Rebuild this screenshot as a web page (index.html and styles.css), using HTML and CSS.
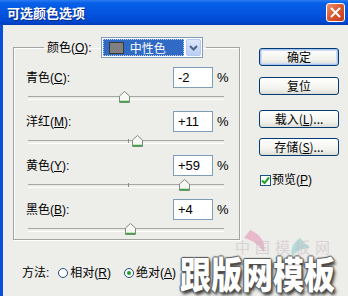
FILE: index.html
```html
<!DOCTYPE html>
<html lang="zh-CN">
<head>
	<meta charset="UTF-8">
	<title>可选颜色选项</title>
	<link rel="stylesheet" href="styles.css">
</head>
<body>
	<div class="window">
		<div class="titlebar">
			<span class="title">可选颜色选项</span>
			<span class="close">
				<svg width="11" height="11" viewBox="0 0 11 11"><path d="M1.5 1.5 L9.5 9.5 M9.5 1.5 L1.5 9.5" stroke="#fff" stroke-width="2" stroke-linecap="round"/></svg>
			</span>
		</div>
		<div class="client">
			<div class="main">
				<fieldset class="group">
					<legend class="group-legend">
						<span class="legend-label">颜色(<u>O</u>):</span>
						<span class="select">
							<span class="select-value"><span class="swatch"></span>中性色</span>
							<span class="select-btn">
								<svg width="9" height="6" viewBox="0 0 9 6"><path d="M1 1 L4.5 4.5 L8 1" fill="none" stroke="#4d6185" stroke-width="2"/></svg>
							</span>
						</span>
					</legend>

					<div class="adjust">
						<div class="adjust-head">
							<span class="adjust-label">青色(<u>C</u>):</span>
							<span class="field">-2</span>
							<span class="pct">%</span>
						</div>
						<div class="track"><span class="tick"></span><span class="thumb" style="left:49%"><svg width="11" height="12" viewBox="0 0 11 12"><path d="M5.5 0.5 L10.5 5 V11.5 H0.5 V5 Z" fill="#f7f7f3" stroke="#7f8a80"/><path d="M1 10.5 H10" stroke="#3ea63e" stroke-width="1.5"/></svg></span></div>
					</div>
					<div class="adjust">
						<div class="adjust-head">
							<span class="adjust-label">洋红(<u>M</u>):</span>
							<span class="field">+11</span>
							<span class="pct">%</span>
						</div>
						<div class="track"><span class="tick"></span><span class="thumb" style="left:55.5%"><svg width="11" height="12" viewBox="0 0 11 12"><path d="M5.5 0.5 L10.5 5 V11.5 H0.5 V5 Z" fill="#f7f7f3" stroke="#7f8a80"/><path d="M1 10.5 H10" stroke="#3ea63e" stroke-width="1.5"/></svg></span></div>
					</div>
					<div class="adjust">
						<div class="adjust-head">
							<span class="adjust-label">黄色(<u>Y</u>):</span>
							<span class="field">+59</span>
							<span class="pct">%</span>
						</div>
						<div class="track"><span class="tick"></span><span class="thumb" style="left:79.5%"><svg width="11" height="12" viewBox="0 0 11 12"><path d="M5.5 0.5 L10.5 5 V11.5 H0.5 V5 Z" fill="#f7f7f3" stroke="#7f8a80"/><path d="M1 10.5 H10" stroke="#3ea63e" stroke-width="1.5"/></svg></span></div>
					</div>
					<div class="adjust">
						<div class="adjust-head">
							<span class="adjust-label">黑色(<u>B</u>):</span>
							<span class="field">+4</span>
							<span class="pct">%</span>
						</div>
						<div class="track"><span class="tick"></span><span class="thumb" style="left:52%"><svg width="11" height="12" viewBox="0 0 11 12"><path d="M5.5 0.5 L10.5 5 V11.5 H0.5 V5 Z" fill="#f7f7f3" stroke="#7f8a80"/><path d="M1 10.5 H10" stroke="#3ea63e" stroke-width="1.5"/></svg></span></div>
					</div>
				</fieldset>

				<div class="side">
					<a href="javascript:;" class="btn btn-default">确定</a>
					<a href="javascript:;" class="btn btn-reset">复位</a>
					<a href="javascript:;" class="btn btn-load">载入(<u>L</u>)...</a>
					<a href="javascript:;" class="btn btn-save">存储(<u>S</u>)...</a>
					<label class="check">
						<span class="check-box">
							<svg width="9" height="9" viewBox="0 0 9 9"><path d="M1 4.5 L3.5 7 L8 1.5" fill="none" stroke="#21a121" stroke-width="2"/></svg>
						</span>预览(<u>P</u>)
					</label>
				</div>
			</div>

			<div class="method">
				<span class="method-label">方法:</span>
				<span class="radio"></span><span class="radio-text">相对(<u>R</u>)</span>
				<span class="radio on"></span><span class="radio-text">绝对(<u>A</u>)</span>
			</div>

			<!-- 水印 -->
			<div class="watermark">
				<svg class="wm-logo" width="120" height="34" viewBox="0 0 120 34">
					<path d="M20 2 C30 6 36 14 34 24 C28 16 22 12 14 10 Z" fill="#e6a3c0" opacity=".7"/>
					<path d="M70 10 C64 14 60 20 62 28 C68 22 74 20 80 20 Z" fill="#8fcfcf" opacity=".6"/>
				</svg>
				<span class="wm-small">中国模板网</span>
				<span class="wm-big">跟版网模板</span>
			</div>
		</div>
	</div>
</body>
</html>
```

FILE: styles.css
```css
*{margin:0;padding:0;text-decoration:none;box-sizing:border-box;}
body{width:348px;height:296px;overflow:hidden;font:12px/14px "Liberation Sans","Noto Sans CJK SC",sans-serif;color:#000;}
u{text-decoration:underline;}

.window{width:348px;height:296px;display:flex;flex-direction:column;background:#0a4fd9;}
.titlebar{height:25px;flex:none;display:flex;align-items:center;justify-content:space-between;padding:0 3px 0 7px;
	background:linear-gradient(#2a7cf0 0%,#0860e8 12%,#0455e0 50%,#0049d2 85%,#003cb8 100%);}
.title{color:#fff;font-weight:bold;font-size:13px;line-height:16px;font-family:"Noto Sans CJK SC",sans-serif;text-shadow:1px 1px 0 #0a2a8a;}
.close{width:19px;height:19px;border:1px solid #fff;border-radius:3px;display:flex;align-items:center;justify-content:center;
	background:linear-gradient(135deg,#ec9270 0%,#dc5a33 45%,#c23d1a 100%);}

.client{flex:1;position:relative;margin-left:3px;background:#ededea;padding:12px 0 0 10px;}
.main{display:flex;align-items:flex-start;}

/* 分组框 */
.group{width:227px;border:1px solid #a3a3a0;box-shadow:inset 1px 1px 0 #fff,1px 1px 0 #fff;padding:9px 10px 4px 12px;}
.group-legend{margin-left:18px;padding:0 3px;display:flex;align-items:center;}
.legend-label{margin-right:9px;}
.select{width:102px;height:21px;border:1px solid #7f9db9;background:#fff;display:flex;padding:1px;}
.select-value{width:81px;background:#316ac5;color:#fff;outline:1px dotted #c0d0ee;outline-offset:-1px;display:flex;align-items:center;padding-left:6px;font-family:"Noto Sans CJK SC",sans-serif;}
.swatch{width:15px;height:12px;background:#808080;border:1px solid #3a3a3a;margin-right:6px;}
.select-btn{flex:1;margin-left:2px;border:1px solid #b6c9f4;border-radius:2px;background:linear-gradient(#dce6fc,#b9cdf7);display:flex;align-items:center;justify-content:center;}

.adjust{margin-bottom:8px;}
.adjust:last-child{margin-bottom:0;}
.adjust-head{height:21px;display:flex;align-items:center;}
.adjust-label{flex:1;}
.field{width:40px;height:21px;border:1px solid #7f9db9;background:#fff;padding:3px 0 0 4px;font-size:13px;}
.pct{width:12px;margin-left:4px;font-size:13px;}
.track{position:relative;height:12px;margin:3px 5px 0 2px;}
.track:before{content:"";position:absolute;left:0;right:0;top:5px;height:2px;border-top:1px solid #a6a6a3;border-bottom:1px solid #fff;}
.tick{position:absolute;left:51%;top:4px;width:1px;height:4px;background:#8c8c8a;}
.thumb{position:absolute;top:0;width:11px;height:12px;margin-left:-5px;display:block;}
.thumb svg{display:block;}

/* 右侧按钮 */
.side{margin-left:19px;padding-top:11px;display:flex;flex-direction:column;align-items:flex-start;}
.btn{width:80px;height:18px;border:1px solid #003c74;border-radius:3px;color:#000;text-align:center;line-height:16px;
	background:linear-gradient(#fff,#f1f1ec 70%,#dcdcd4);font-family:"Noto Sans CJK SC",sans-serif;}
.btn-default{box-shadow:inset 0 0 0 1px #a9c3f0,inset 0 0 0 2px #cfdcf6;}
.btn-reset{margin-top:11px;}
.btn-load{margin-top:15px;}
.btn-save{margin-top:10px;}
.check{margin-top:17px;display:flex;align-items:center;margin-left:1px;}
.check-box{width:11px;height:11px;border:1px solid #1c5180;background:#fff;display:flex;align-items:center;justify-content:center;margin-right:1px;}

/* 方法 */
.method{margin-top:26px;padding-left:9px;display:flex;align-items:center;}
.method-label{margin-right:9px;}
.radio{width:10px;height:10px;border:1px solid #1c5180;border-radius:50%;background:#fff;margin-right:2px;display:flex;align-items:center;justify-content:center;}
.radio.on:after{content:"";width:4px;height:4px;border-radius:50%;background:#21a121;}
.radio-text{margin-right:13px;}

/* 水印 */
.watermark{position:absolute;left:177px;top:203px;width:165px;height:66px;}
.wm-logo{position:absolute;left:50px;top:0;}
.wm-small{position:absolute;left:55px;top:11px;font-size:15px;line-height:15px;letter-spacing:5px;color:rgba(200,185,195,.55);font-family:"Noto Sans CJK SC",sans-serif;}
.wm-big{position:absolute;left:0;top:26px;font-size:31px;line-height:32px;font-weight:900;color:#fff;font-family:"Noto Sans CJK SC",sans-serif;
	transform:scaleY(1.2);transform-origin:left top;letter-spacing:0;
	text-shadow:-1px 0 1px #555,1px 0 1px #555,0 -1px 1px #555,0 1px 1px #555,2px 3px 3px #333;}
```
